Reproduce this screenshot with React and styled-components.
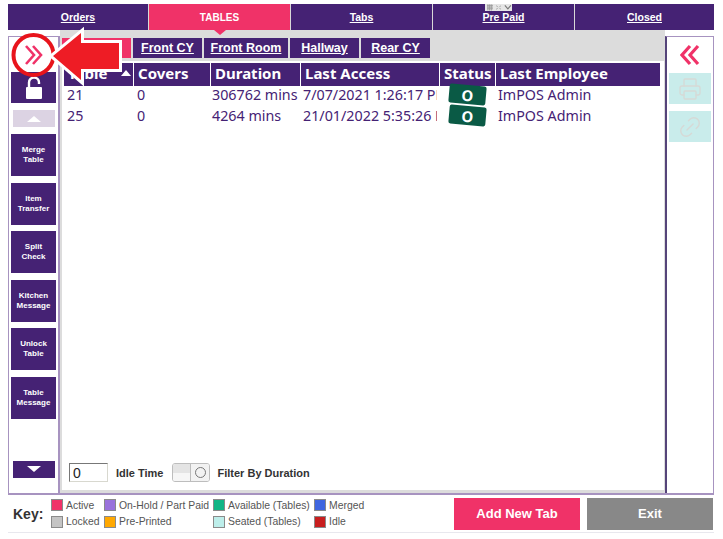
import React from 'react';
import styled, { createGlobalStyle } from 'styled-components';
import { Printer, Link2 } from 'lucide-react';

const purple = '#452274';
const pink = '#f03268';
const rule = '#a793c0';

const GlobalStyle = createGlobalStyle`
  html, body {
    margin: 0;
    padding: 0;
    background: #ffffff;
    overflow: hidden;
  }
  * {
    box-sizing: border-box;
  }
`;

const Page = styled.div`
  position: relative;
  width: 723px;
  height: 539px;
  padding: 4px 9px 0 8px;
  font-family: "Liberation Sans", Arial, sans-serif;
  background: #ffffff;
`;

const TopBar = styled.div`
  display: grid;
  grid-template-columns: 140px 141px 141px 141px 1fr;
  gap: 1px;
  height: 26px;
  background: #d8d8d8;
`;

const TopTab = styled.div`
  position: relative;
  display: flex;
  align-items: center;
  justify-content: center;
  font-size: ${(p) => (p.$active ? 10 : 10.500)}px;
  font-weight: bold;
  color: #ffffff;
  text-decoration: ${(p) => (p.$active ? 'none' : 'underline')};
  background: ${(p) => (p.$active ? pink : purple)};

  ${(p) =>
    p.$active &&
    `
    &::after {
      content: '';
      position: absolute;
      left: 50%;
      bottom: -5px;
      margin-left: -6px;
      border-left: 6px solid transparent;
      border-right: 6px solid transparent;
      border-top: 5px solid ${pink};
    }
  `}
`;

const MiniToolbar = styled.div`
  position: absolute;
  top: 4px;
  left: 485px;
  display: flex;
  align-items: center;
  gap: 3px;
  width: 27px;
  height: 7px;
  padding-left: 2px;
  background: #e6e6e6;
  color: #777777;
`;

const Workspace = styled.div`
  display: flex;
  height: 463px;
`;

const SideRail = styled.div`
  display: flex;
  flex-direction: column;
  align-items: center;
  width: ${(p) => p.$width}px;
  margin-top: 6px;
  background: #ffffff;
  border-top: 1px solid ${rule};
  border-left: 1px solid ${rule};
  border-right: 2px solid ${rule};
`;

const LeftRail = styled(SideRail)`
  padding-top: 35px;
`;

const RightRail = styled(SideRail)`
  border-left: 2px solid #55447a;
  border-right: 1px solid ${rule};
  padding-top: 7px;
`;

const Chevrons = styled.svg`
  display: block;
  flex: none;
`;

const RailButton = styled.div`
  display: flex;
  align-items: center;
  justify-content: center;
  flex: none;
  width: 45px;
  height: ${(p) => p.$height || 42}px;
  margin-top: ${(p) => p.$gap ?? 7}px;
  background: ${purple};
  color: #ffffff;
  font-size: 8px;
  font-weight: bold;
  line-height: 10px;
  text-align: center;
`;

const ScrollButton = styled.div`
  display: flex;
  align-items: center;
  justify-content: center;
  flex: none;
  width: 42px;
  height: 17px;
  margin-top: ${(p) => p.$gap}px;
  background: ${(p) => (p.$muted ? '#dcd3e3' : purple)};

  &::after {
    content: '';
    border-left: 7px solid transparent;
    border-right: 7px solid transparent;
    ${(p) =>
      p.$down ? 'border-top: 6px solid #ffffff;' : 'border-bottom: 6px solid #ffffff;'}
  }
`;

const ToolButton = styled.div`
  display: flex;
  align-items: center;
  justify-content: center;
  flex: none;
  width: 42px;
  height: 31px;
  margin-top: ${(p) => p.$gap}px;
  background: #c9eceb;
  color: #d6d9d6;
`;

const Centre = styled.div`
  display: flex;
  flex-direction: column;
  width: 605px;
  padding: 8px 1px 3px 2px;
  background: #dcdcdc;
`;

const AreaTabs = styled.div`
  display: flex;
  gap: 2px;
  height: 20px;
`;

const AreaTab = styled.div`
  display: flex;
  align-items: center;
  justify-content: center;
  width: ${(p) => p.$width}px;
  padding-bottom: 1px;
  background: ${(p) => (p.$active ? pink : purple)};
  color: #ffffff;
  font-size: 12.500px;
  font-weight: bold;
  text-decoration: underline;
`;

const Sheet = styled.div`
  display: flex;
  flex-direction: column;
  flex: 1;
  margin-top: 3px;
  padding: 2px 2px 0 2px;
  background: #ffffff;
`;

const columns = '69px 76px 89px 138px 55px 164px';

const HeadRow = styled.div`
  display: grid;
  grid-template-columns: ${columns};
  gap: 1px;
  height: 21px;
`;

const HeadCell = styled.div`
  display: flex;
  align-items: center;
  justify-content: space-between;
  padding: 0 0 3px 4px;
  background: ${purple};
  color: #ffffff;
  font-family: "Noto Sans", sans-serif;
  font-size: 15px;
  font-weight: bold;
  white-space: nowrap;
`;

const SortCaret = styled.span`
  margin: 0 2px 0 0;
  border-left: 5px solid transparent;
  border-right: 5px solid transparent;
  border-bottom: 6px solid #ffffff;
`;

const BodyRow = styled.div`
  display: grid;
  grid-template-columns: ${columns};
  gap: 1px;
  height: 21px;
`;

const BodyCell = styled.div`
  display: flex;
  align-items: center;
  margin-right: ${(p) => p.$clip || 0}px;
  padding-left: ${(p) => p.$inset ?? 3}px;
  overflow: ${(p) => (p.$open ? 'visible' : 'hidden')};
  color: ${purple};
  font-family: "Noto Sans", sans-serif;
  font-size: 14.300px;
  white-space: nowrap;
`;

const StatusPill = styled.div`
  display: flex;
  flex: none;
  align-items: center;
  justify-content: center;
  width: 37px;
  height: 19px;
  margin-left: 9px;
  border-radius: 2px;
  background: #0a5a45;
  color: #ffffff;
  font-size: 15px;
  font-weight: bold;
  transform: rotate(5deg);
`;

const FilterBar = styled.div`
  display: flex;
  align-items: center;
  margin-top: auto;
  padding: 0 0 8px 5px;
`;

const IdleInput = styled.div`
  display: flex;
  align-items: center;
  width: 39px;
  height: 19px;
  padding-left: 3px;
  border: 1px solid #d8d8cf;
  border-top-color: #777777;
  border-left-color: #777777;
  font-size: 14px;
  color: #222222;
`;

const FilterLabel = styled.div`
  margin-left: ${(p) => p.$gap}px;
  font-size: 11px;
  font-weight: bold;
  color: #333333;
  white-space: nowrap;
`;

const Toggle = styled.div`
  display: flex;
  width: 38px;
  height: 19px;
  margin-left: 9px;
  border: 1px solid #bdbdbd;
  border-radius: 3px;
  overflow: hidden;
`;

const ToggleTrack = styled.div`
  width: 18px;
  border-right: 1px solid #bdbdbd;
  background: linear-gradient(#e4e4e4 50%, #f6f6f6 50%);
`;

const ToggleThumb = styled.div`
  display: flex;
  flex: 1;
  align-items: center;
  justify-content: center;
  background: #f2f2f2;

  &::after {
    content: '';
    width: 9px;
    height: 9px;
    border: 1px solid #777777;
    border-radius: 50%;
  }
`;

const KeyBar = styled.div`
  display: flex;
  align-items: center;
  height: 40px;
  border-top: 2px solid ${rule};
  border-bottom: 1px solid #e8e8ee;
`;

const KeyTitle = styled.div`
  width: 43px;
  padding-left: 5px;
  font-size: 14px;
  font-weight: bold;
  color: #333333;
`;

const KeyGrid = styled.div`
  display: grid;
  grid-template-columns: 53px 109px 101px 100px;
  grid-auto-rows: 16.500px;
  align-items: center;
`;

const KeyItem = styled.div`
  display: flex;
  align-items: center;
  gap: 3px;
  font-size: 10.400px;
  color: #555555;
  white-space: nowrap;
`;

const Swatch = styled.span`
  flex: none;
  width: 12px;
  height: 12px;
  border: 1px solid #8a8a8a;
  background: ${(p) => p.$color};
`;

const ActionButton = styled.div`
  display: flex;
  align-items: center;
  justify-content: center;
  width: 126px;
  height: 32px;
  margin-left: ${(p) => p.$gap}px;
  background: ${(p) => p.$color};
  color: #ffffff;
  font-size: 13px;
  font-weight: bold;
`;

const Callout = styled.svg`
  position: absolute;
  top: 0;
  left: 0;
  pointer-events: none;
`;

const railActions = [
  ['Merge', 'Table'],
  ['Item', 'Transfer'],
  ['Split', 'Check'],
  ['Kitchen', 'Message'],
  ['Unlock', 'Table'],
  ['Table', 'Message'],
];

const areas = [
  { name: '', width: 69, active: true },
  { name: 'Front CY', width: 69 },
  { name: 'Front Room', width: 84 },
  { name: 'Hallway', width: 69 },
  { name: 'Rear CY', width: 69 },
];

const rows = [
  ['21', '0', '306762 mins', '7/07/2021 1:26:17 PM', 'ImPOS Admin'],
  ['25', '0', '4264 mins', '21/01/2022 5:35:26 PM', 'ImPOS Admin'],
];

const keyItems = [
  ['Active', pink],
  ['On-Hold / Part Paid', '#9a72dc'],
  ['Available (Tables)', '#10b585'],
  ['Merged', '#3f66e0'],
  ['Locked', '#c4c4c4'],
  ['Pre-Printed', '#ffa800'],
  ['Seated (Tables)', '#bdeeea'],
  ['Idle', '#c81e1e'],
];

function App() {
  return (
    <Page>
      <GlobalStyle />
      <TopBar>
        <TopTab>Orders</TopTab>
        <TopTab $active>TABLES</TopTab>
        <TopTab>Tabs</TopTab>
        <TopTab>Pre Paid</TopTab>
        <TopTab>Closed</TopTab>
      </TopBar>
      <MiniToolbar>
        <svg width="7" height="7" viewBox="0 0 7 7">
          <path d="M0 1h7M0 3h7M0 5h7M1 0v7M3 0v7M5 0v7" stroke="#999" strokeWidth="1" />
        </svg>
        <svg width="6" height="7" viewBox="0 0 6 7">
          <path d="M0 1l2 2M6 1L4 3M0 6l2-2M6 6L4 4" stroke="#999" strokeWidth="1" />
        </svg>
        <svg width="9" height="7" viewBox="0 0 9 7">
          <path d="M1 1l3.500 4L8 1" fill="none" stroke="#777" strokeWidth="1.300" />
        </svg>
      </MiniToolbar>

      <Workspace>
        <LeftRail $width={52}>
          <RailButton $height={31} $gap={0}>
            <svg width="18" height="24" viewBox="0 0 18 24">
              <path d="M4 11V6.500a5 5 0 0 1 10 0V8" fill="none" stroke="#fff" strokeWidth="2.400" />
              <rect x="1" y="11" width="16" height="12" rx="1" fill="#fff" />
            </svg>
          </RailButton>
          <ScrollButton $muted $gap={7} />
          {railActions.map(([first, second], i) => (
            <RailButton key={first + second} $gap={i === 0 ? 7 : 6.500}>
              {first}
              <br />
              {second}
            </RailButton>
          ))}
          <ScrollButton $down $gap={42} />
        </LeftRail>

        <Centre>
          <AreaTabs>
            {areas.map((area) => (
              <AreaTab key={area.name} $width={area.width} $active={area.active}>
                {area.name}
              </AreaTab>
            ))}
          </AreaTabs>
          <Sheet>
            <HeadRow>
              <HeadCell>
                Table <SortCaret />
              </HeadCell>
              <HeadCell>Covers</HeadCell>
              <HeadCell>Duration</HeadCell>
              <HeadCell>Last Access</HeadCell>
              <HeadCell>Status</HeadCell>
              <HeadCell>Last Employee</HeadCell>
            </HeadRow>
            {rows.map((row) => (
              <BodyRow key={row[0]}>
                <BodyCell>{row[0]}</BodyCell>
                <BodyCell>{row[1]}</BodyCell>
                <BodyCell $inset={1}>{row[2]}</BodyCell>
                <BodyCell $inset={2} $clip={2}>{row[3]}</BodyCell>
                <BodyCell $inset={0} $open>
                  <StatusPill>O</StatusPill>
                </BodyCell>
                <BodyCell $inset={2}>{row[4]}</BodyCell>
              </BodyRow>
            ))}
            <FilterBar>
              <IdleInput>0</IdleInput>
              <FilterLabel $gap={8}>Idle Time</FilterLabel>
              <Toggle>
                <ToggleTrack />
                <ToggleThumb />
              </Toggle>
              <FilterLabel $gap={7}>Filter By Duration</FilterLabel>
            </FilterBar>
          </Sheet>
        </Centre>

        <RightRail $width={49}>
          <Chevrons width="20" height="22" viewBox="0 0 20 22">
            <path
              d="M10 2L2 11l8 9M18 2l-8 9 8 9"
              fill="none"
              stroke={pink}
              strokeWidth="3.200"
            />
          </Chevrons>
          <ToolButton $gap={7}>
            <Printer size={24} strokeWidth={1.300} />
          </ToolButton>
          <ToolButton $gap={7}>
            <Link2 size={26} strokeWidth={1.300} style={{ transform: 'rotate(-45deg)' }} />
          </ToolButton>
        </RightRail>
      </Workspace>

      <KeyBar>
        <KeyTitle>Key:</KeyTitle>
        <KeyGrid>
          {keyItems.map(([label, color]) => (
            <KeyItem key={label}>
              <Swatch $color={color} />
              {label}
            </KeyItem>
          ))}
        </KeyGrid>
        <ActionButton $color={pink} $gap={40}>
          Add New Tab
        </ActionButton>
        <ActionButton $color="#888888" $gap={7}>
          Exit
        </ActionButton>
      </KeyBar>

      <Callout width="723" height="539" viewBox="0 0 723 539">
        <path d="M26 46l8 9-8 9M33 46l8 9-8 9" fill="none" stroke={pink} strokeWidth="2.600" />
        <circle cx="33.500" cy="55" r="20" fill="none" stroke="#e8141c" strokeWidth="4" />
        <polygon
          points="53,56 81,33 81,43 119,43 119,69 81,69 81,80"
          fill="#ee1c25"
          stroke="#ffffff"
          strokeWidth="6"
          strokeLinejoin="miter"
          paintOrder="stroke"
        />
      </Callout>
    </Page>
  );
}

export default App;
